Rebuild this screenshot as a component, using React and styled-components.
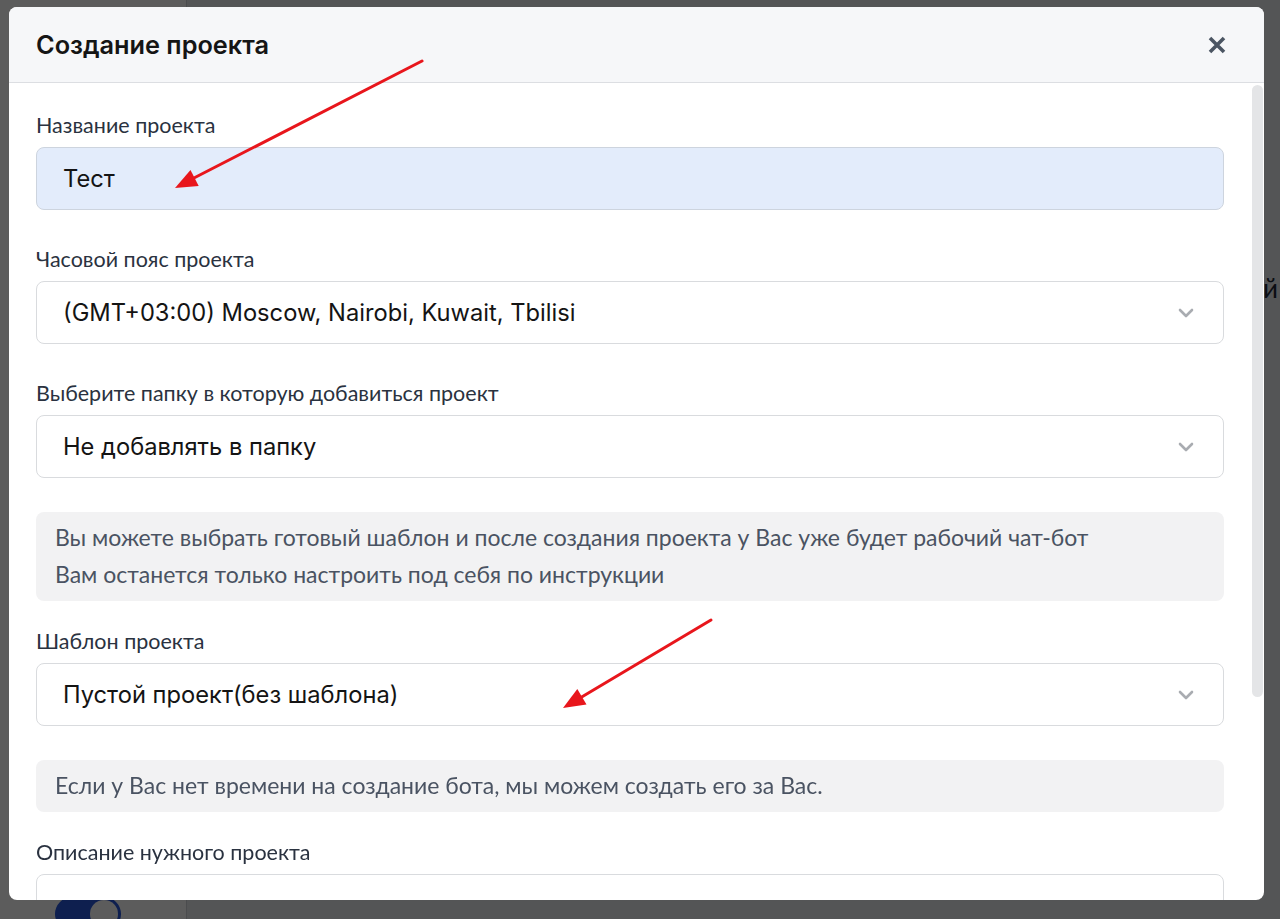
import React from 'react';
import styled, { createGlobalStyle } from 'styled-components';

const GlobalStyle = createGlobalStyle`
  html, body {
    margin: 0;
    padding: 0;
    height: 100%;
    overflow: hidden;
  }
  body {
    font-family: Lato, "Noto Sans", sans-serif;
  }
`;

const Page = styled.div`
  display: flex;
  height: 919px;
  background: #e9ebee;
`;

const Sidebar = styled.aside`
  width: 187px;
  background: #ffffff;
  border-right: 1px solid #cfd3d8;
  display: flex;
  flex-direction: column;
  justify-content: flex-end;
  align-items: flex-start;
  padding-left: 55px;
  box-sizing: border-box;
`;

const Toggle = styled.div`
  width: 66px;
  height: 34px;
  border-radius: 17px;
  background: #2756db;
  margin-bottom: -12px;
  display: flex;
  align-items: center;
  justify-content: flex-end;
  padding: 0 3px;
  box-sizing: border-box;
  &::after {
    content: '';
    width: 28px;
    height: 28px;
    border-radius: 50%;
    background: #ffffff;
  }
`;

const Main = styled.main`
  flex: 1;
  display: flex;
  justify-content: flex-end;
  padding-top: 272px;
`;

const MainAction = styled.span`
  font-size: 26px;
  color: #1f2937;
  margin-right: 2px;
`;

const Overlay = styled.div`
  position: fixed;
  inset: 0;
  background: rgba(0, 0, 0, 0.64);
  display: flex;
  padding: 7px 16px 19px 9px;
  box-sizing: border-box;
`;

const Modal = styled.div`
  position: relative;
  flex: 1;
  min-width: 0;
  display: flex;
  flex-direction: column;
  background: #ffffff;
  border-radius: 8px;
  overflow: hidden;
`;

const Header = styled.div`
  height: 75px;
  flex-shrink: 0;
  background: #f6f7f9;
  border-bottom: 1px solid #dcdee2;
  display: flex;
  align-items: center;
  justify-content: space-between;
  padding: 0 38px 0 27px;
`;

const Title = styled.h2`
  margin: 0;
  font-family: Inter, "Liberation Sans", sans-serif;
  font-size: 25.3px;
  font-weight: 600;
  color: #151515;
`;

const CloseButton = styled.button`
  border: 0;
  background: none;
  padding: 0;
  width: 18px;
  height: 18px;
  display: flex;
  cursor: pointer;
  color: #4b5563;
`;

const Body = styled.div`
  flex: 1;
  min-height: 0;
  overflow: hidden;
  padding: 31px 40px 0 27px;
  display: flex;
  flex-direction: column;
`;

const ScrollThumb = styled.div`
  position: absolute;
  top: 78px;
  right: 1px;
  width: 11px;
  height: 612px;
  border-radius: 6px;
  background: #e4e5e7;
`;

const Field = styled.div`
  display: flex;
  flex-direction: column;
  margin-bottom: ${p => (p.$tight ? '34px' : '38px')};
  flex-shrink: 0;
`;

const Label = styled.label`
  font-size: 21.5px;
  line-height: 22px;
  color: #2a3240;
  margin-bottom: 11px;
`;

const Input = styled.div`
  height: 63px;
  box-sizing: border-box;
  border: 1px solid ${p => (p.$filled ? '#cdd4de' : '#d9dbde')};
  background: ${p => (p.$filled ? '#e3ecfb' : '#ffffff')};
  border-radius: 8px;
  display: flex;
  align-items: center;
  justify-content: space-between;
  padding: 0 29px 0 26px;
  font-family: Inter, "Liberation Sans", sans-serif;
  font-size: 23.7px;
  color: #141414;
`;

const TextArea = styled.div`
  height: 130px;
  box-sizing: border-box;
  border: 1px solid #d9dbde;
  border-radius: 8px;
`;

const Chevron = styled.svg`
  width: 16px;
  height: 10px;
  color: #a9acb1;
`;

const Info = styled.div`
  flex-shrink: 0;
  background: #f2f2f3;
  border-radius: 8px;
  padding: 7px 19px 8px;
  margin-bottom: 29px;
  font-size: 23px;
  line-height: 37px;
  color: #4a5362;
`;

const Annotations = styled.svg`
  position: fixed;
  inset: 0;
  width: 1280px;
  height: 919px;
  pointer-events: none;
`;

const ChevronDown = () => (
  <Chevron viewBox="0 0 16 10" fill="none">
    <path d="M2 2l6 6 6-6" stroke="currentColor" strokeWidth="2.6" strokeLinecap="round" strokeLinejoin="round" />
  </Chevron>
);

const Select = ({ value }) => (
  <Input>
    <span>{value}</span>
    <ChevronDown />
  </Input>
);

export default function App() {
  return (
    <>
      <GlobalStyle />
      <Page>
        <Sidebar>
          <Toggle />
        </Sidebar>
        <Main>
          <MainAction>Создать новый</MainAction>
        </Main>
      </Page>
      <Overlay>
        <Modal>
          <Header>
            <Title>Создание проекта</Title>
            <CloseButton aria-label="Закрыть">
              <svg width="18" height="18" viewBox="0 0 18 18">
                <path d="M2 2l14 14M16 2L2 16" stroke="currentColor" strokeWidth="3.6" />
              </svg>
            </CloseButton>
          </Header>
          <Body>
            <Field>
              <Label>Название проекта</Label>
              <Input $filled>Тест</Input>
            </Field>
            <Field>
              <Label>Часовой пояс проекта</Label>
              <Select value="(GMT+03:00) Moscow, Nairobi, Kuwait, Tbilisi" />
            </Field>
            <Field $tight>
              <Label>Выберите папку в которую добавиться проект</Label>
              <Select value="Не добавлять в папку" />
            </Field>
            <Info>
              Вы можете выбрать готовый шаблон и после создания проекта у Вас уже будет рабочий чат-бот
              <br />
              Вам останется только настроить под себя по инструкции
            </Info>
            <Field $tight>
              <Label>Шаблон проекта</Label>
              <Select value="Пустой проект(без шаблона)" />
            </Field>
            <Info>Если у Вас нет времени на создание бота, мы можем создать его за Вас.</Info>
            <Field>
              <Label>Описание нужного проекта</Label>
              <TextArea />
            </Field>
          </Body>
          <ScrollThumb />
        </Modal>
      </Overlay>
      <Annotations viewBox="0 0 1280 919">
        <g stroke="#e8161c" strokeWidth="3" strokeLinecap="round" fill="#e8161c">
          <line x1="422" y1="61" x2="192" y2="179" />
          <polygon points="175,188 198.7,185.9 190.5,169.9" stroke="none" />
          <line x1="711" y1="620" x2="580" y2="698" />
          <polygon points="563,708 586.5,704.5 577.3,689.1" stroke="none" />
        </g>
      </Annotations>
    </>
  );
}
